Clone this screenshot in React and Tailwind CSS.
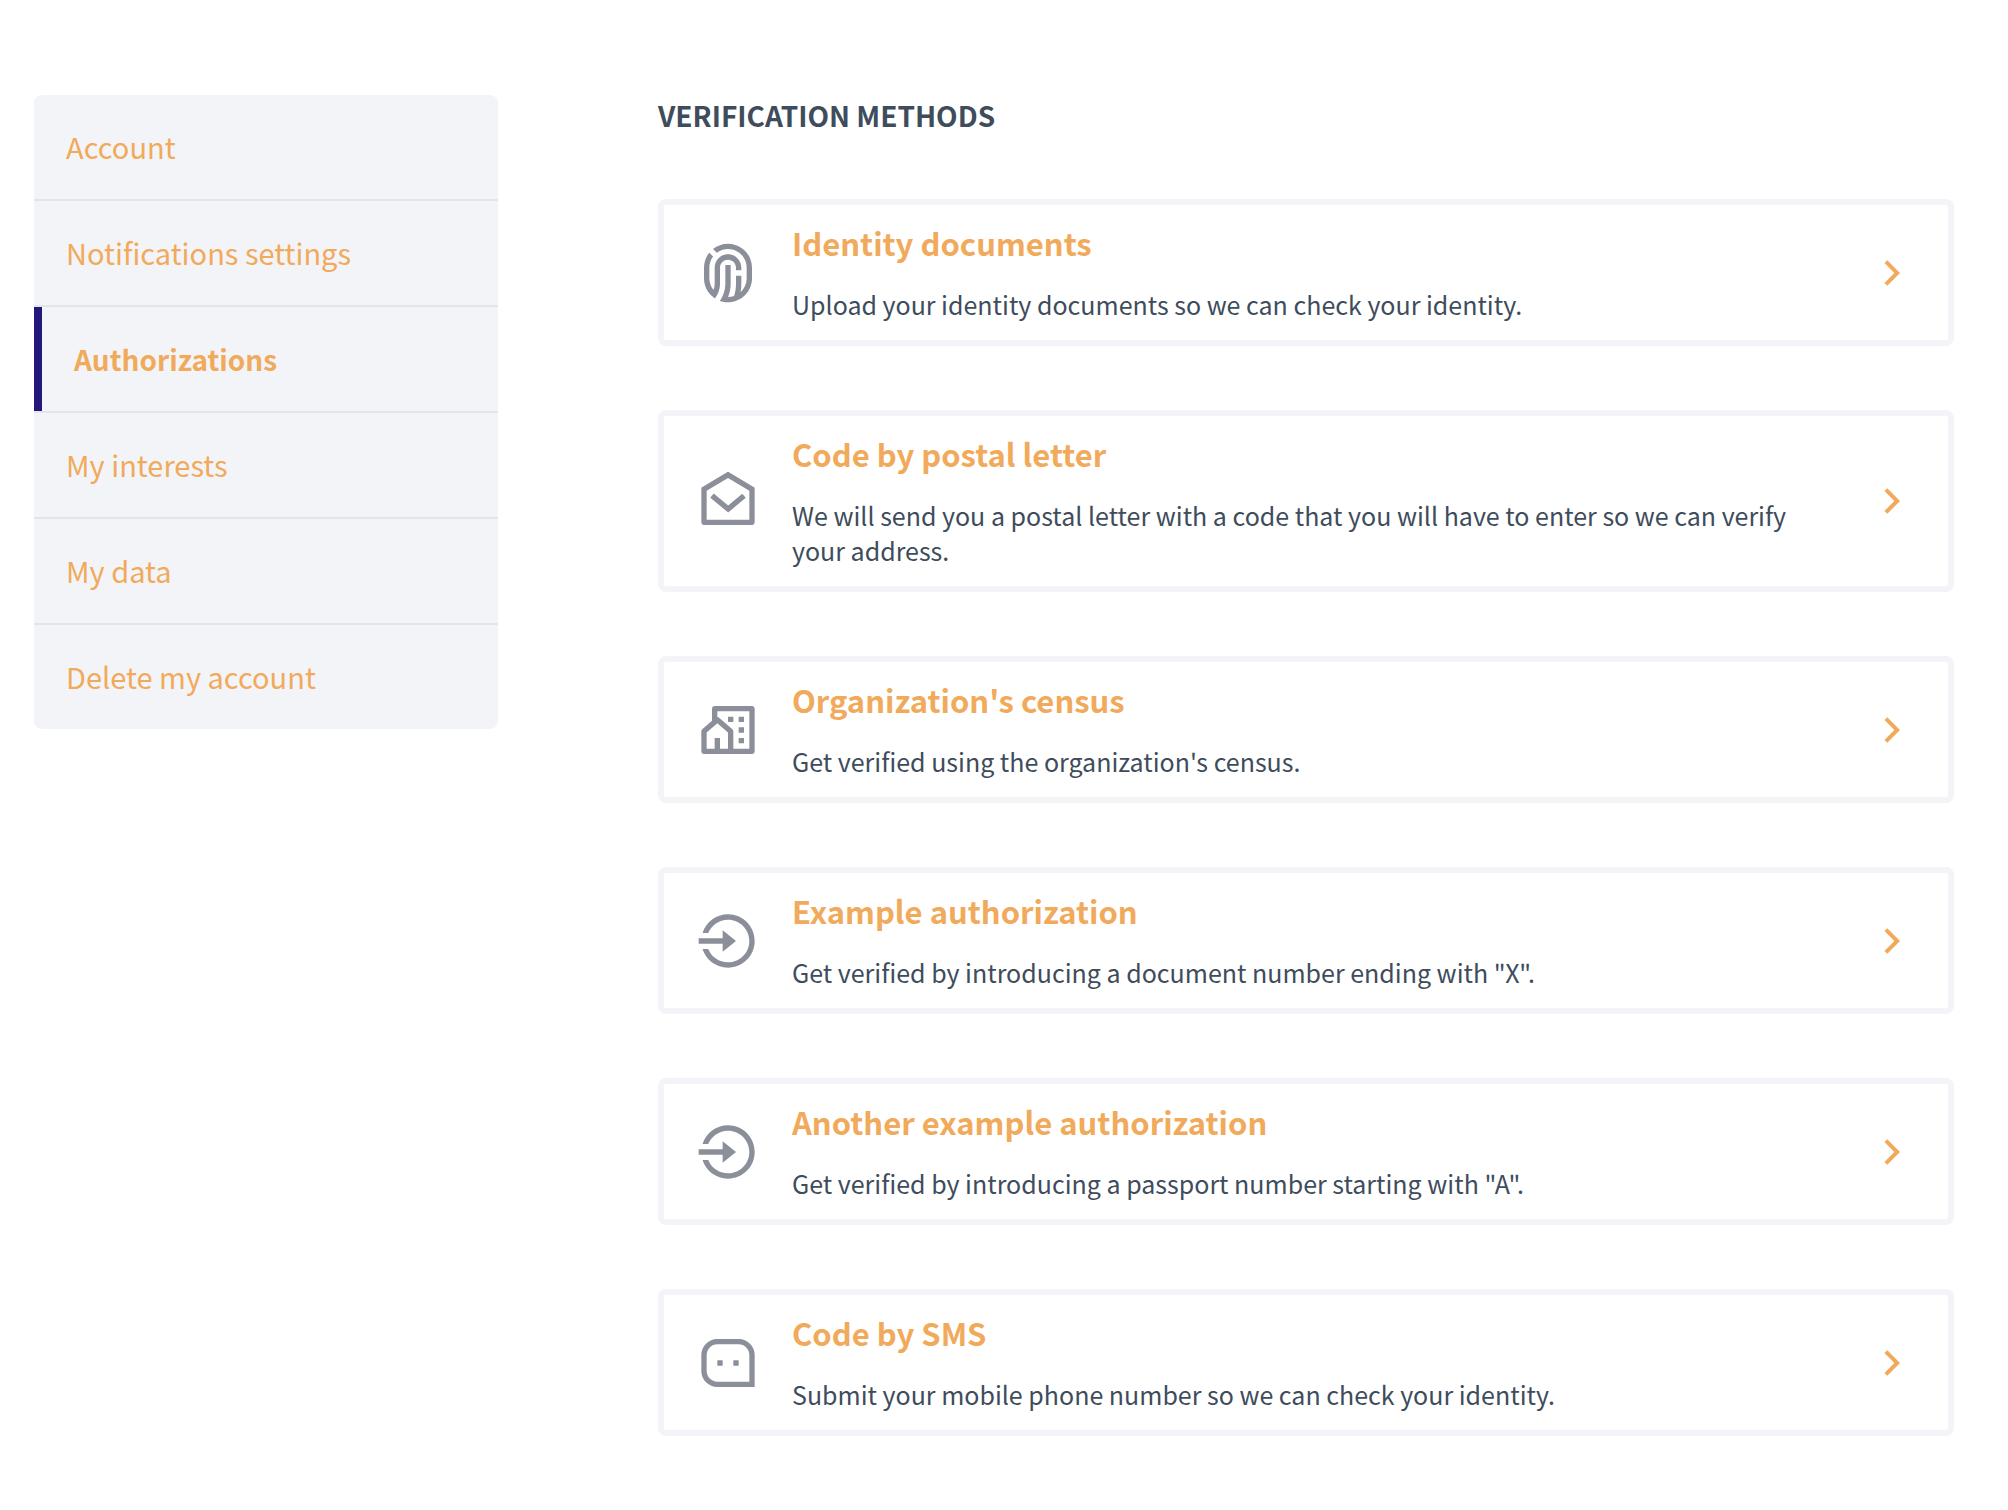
import {
  RiArrowRightSLine,
  RiCommunityLine,
  RiFingerprint2Line,
  RiLoginCircleLine,
  RiMailOpenLine,
} from "react-icons/ri";

const navItems = [
  { label: "Account" },
  { label: "Notifications settings" },
  { label: "Authorizations", current: true },
  { label: "My interests" },
  { label: "My data" },
  { label: "Delete my account" },
];

function MessageIcon({ className }) {
  return (
    <svg viewBox="0 0 24 24" fill="currentColor" className={className} aria-hidden="true">
      <path d="M2 9a6 6 0 0 1 6-6h8a6 6 0 0 1 6 6v12H8a6 6 0 0 1-6-6V9Zm18 10V9a4 4 0 0 0-4-4H8a4 4 0 0 0-4 4v6a4 4 0 0 0 4 4h12Zm-6-8h2v2h-2v-2Zm-6 0h2v2H8v-2Z" />
    </svg>
  );
}

const methods = [
  {
    icon: RiFingerprint2Line,
    title: "Identity documents",
    text: "Upload your identity documents so we can check your identity.",
  },
  {
    icon: RiMailOpenLine,
    title: "Code by postal letter",
    text: "We will send you a postal letter with a code that you will have to enter so we can verify your address.",
  },
  {
    icon: RiCommunityLine,
    title: "Organization's census",
    text: "Get verified using the organization's census.",
  },
  {
    icon: RiLoginCircleLine,
    title: "Example authorization",
    text: 'Get verified by introducing a document number ending with "X".',
  },
  {
    icon: RiLoginCircleLine,
    title: "Another example authorization",
    text: 'Get verified by introducing a passport number starting with "A".',
  },
  {
    icon: MessageIcon,
    title: "Code by SMS",
    text: "Submit your mobile phone number so we can check your identity.",
  },
];

function SideNav() {
  return (
    <nav aria-label="Account" className="w-[464px] shrink-0 self-start overflow-hidden rounded-lg bg-[#f3f4f7]">
      <ul className="divide-y-2 divide-[#e3e4ec]">
        {navItems.map(({ label, current }) => (
          <li key={label}>
            <a
              href="#"
              aria-current={current ? "page" : undefined}
              className={
                current
                  ? "flex h-[104px] items-center border-l-8 border-[#22187a] px-8 text-[28px] font-bold"
                  : "flex h-[104px] items-center px-8 text-[29px]"
              }
            >
              {label}
            </a>
          </li>
        ))}
      </ul>
    </nav>
  );
}

function MethodCard({ icon: Icon, title, text }) {
  return (
    <a
      href="#"
      className="flex items-center gap-8 rounded-lg border-6 border-[#f3f4f7] px-8 py-[14px]"
    >
      <Icon className="size-16 shrink-0 text-[#8b8f99]" />
      <div className="flex grow flex-col gap-5 pb-1">
        <h2 className="text-[31px] leading-[48px] font-bold">{title}</h2>
        <p className="text-[25px] leading-[35px] text-[#3e4c5c]">{text}</p>
      </div>
      <RiArrowRightSLine className="size-12 shrink-0" />
    </a>
  );
}

export default function App() {
  return (
    <div className="flex min-h-screen justify-between gap-40 bg-white pt-[95px] pr-[54px] pb-[76px] pl-[34px] font-['Noto_Sans_CJK_SC',sans-serif] text-[#f1aa5b]">
      <SideNav />
      <main className="grow">
        <h1 className="text-[28px] leading-10 font-bold text-[#3e4c5c] uppercase">
          Verification methods
        </h1>
        <div className="mt-16 flex flex-col gap-16">
          {methods.map((method) => (
            <MethodCard key={method.title} {...method} />
          ))}
        </div>
      </main>
    </div>
  );
}
